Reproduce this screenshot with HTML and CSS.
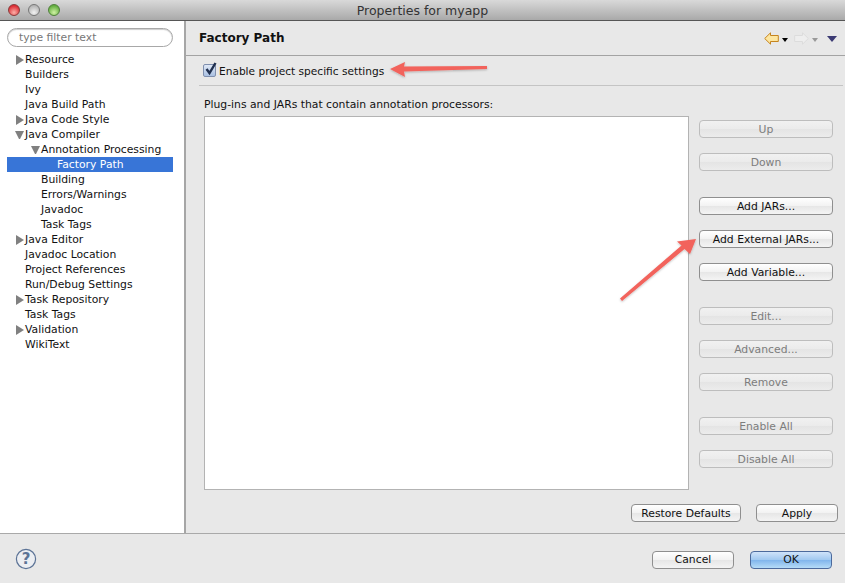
FILE: index.html
```html
<!DOCTYPE html>
<html lang="en">
<head>
    <meta charset="UTF-8">
    <title>Properties for myapp</title>
    <link rel="stylesheet" href="styles.css">
</head>
<body>

<div class="window">
    <div class="titlebar">
        <div class="lights">
            <span class="light red"></span>
            <span class="light grey"></span>
            <span class="light green"></span>
        </div>
        <div class="title">Properties for myapp</div>
    </div>

    <div class="middle">
        <div class="sidebar">
            <div class="filter">type filter text</div>
            <ul class="tree">
                <li class="row"><span class="tw closed"></span>Resource</li>
                <li class="row"><span class="tw"></span>Builders</li>
                <li class="row"><span class="tw"></span>Ivy</li>
                <li class="row"><span class="tw"></span>Java Build Path</li>
                <li class="row"><span class="tw closed"></span>Java Code Style</li>
                <li class="row"><span class="tw open"></span>Java Compiler</li>
                <li class="row lvl1"><span class="tw open"></span>Annotation Processing</li>
                <li class="row lvl2 selected"><span class="tw"></span>Factory Path</li>
                <li class="row lvl1"><span class="tw"></span>Building</li>
                <li class="row lvl1"><span class="tw"></span>Errors/Warnings</li>
                <li class="row lvl1"><span class="tw"></span>Javadoc</li>
                <li class="row lvl1"><span class="tw"></span>Task Tags</li>
                <li class="row"><span class="tw closed"></span>Java Editor</li>
                <li class="row"><span class="tw"></span>Javadoc Location</li>
                <li class="row"><span class="tw"></span>Project References</li>
                <li class="row"><span class="tw"></span>Run/Debug Settings</li>
                <li class="row"><span class="tw closed"></span>Task Repository</li>
                <li class="row"><span class="tw"></span>Task Tags</li>
                <li class="row"><span class="tw closed"></span>Validation</li>
                <li class="row"><span class="tw"></span>WikiText</li>
            </ul>
        </div>

        <div class="main">
            <div class="page-head">
                <h1>Factory Path</h1>
                <div class="nav">
                    <svg width="15" height="13" viewBox="0 0 15 13">
                        <path d="M0.7 6.5 L6.5 0.8 V3.5 H14.3 V9.5 H6.5 V12.2 Z" fill="#fde6a0" stroke="#c5841f" stroke-width="1"/>
                    </svg>
                    <span class="caret"></span>
                    <svg width="15" height="13" viewBox="0 0 15 13">
                        <path d="M14.3 6.5 L8.5 0.8 V3.5 H0.7 V9.5 H8.5 V12.2 Z" fill="#eeeeee" stroke="#dcdcdc" stroke-width="1"/>
                    </svg>
                    <span class="caret off"></span>
                    <span class="caret menu"></span>
                </div>
            </div>

            <div class="enable-row">
                <span class="check">
                    <svg width="15" height="16" viewBox="0 0 15 16">
                        <path d="M3.5 8 L6.5 12 L12.5 2" fill="none" stroke="#20304f" stroke-width="2.4"/>
                    </svg>
                </span>
                <label>Enable project specific settings</label>
            </div>

            <div class="content">
                <div class="list-label">Plug-ins and JARs that contain annotation processors:</div>
                <div class="list-area">
                    <div class="listbox"></div>
                    <div class="side-buttons">
                        <div class="btn-group">
                            <button class="btn" disabled>Up</button>
                            <button class="btn" disabled>Down</button>
                        </div>
                        <div class="btn-group">
                            <button class="btn">Add JARs...</button>
                            <button class="btn">Add External JARs...</button>
                            <button class="btn">Add Variable...</button>
                        </div>
                        <div class="btn-group">
                            <button class="btn" disabled>Edit...</button>
                            <button class="btn" disabled>Advanced...</button>
                            <button class="btn" disabled>Remove</button>
                        </div>
                        <div class="btn-group">
                            <button class="btn" disabled>Enable All</button>
                            <button class="btn" disabled>Disable All</button>
                        </div>
                    </div>
                </div>
                <div class="page-buttons">
                    <button class="btn restore">Restore Defaults</button>
                    <button class="btn apply">Apply</button>
                </div>
            </div>
        </div>
    </div>

    <div class="footer">
        <svg class="help" width="22" height="22" viewBox="0 0 22 22">
            <circle cx="11" cy="11" r="9.6" fill="#eceef2" stroke="#5c7396" stroke-width="1.2"/>
            <text x="11" y="16" text-anchor="middle" class="help-mark">?</text>
        </svg>
        <div class="footer-buttons">
            <button class="btn cancel">Cancel</button>
            <button class="btn ok">OK</button>
        </div>
    </div>

    <!-- red annotation arrows drawn over the dialog -->
    <svg class="annotations" width="845" height="583" viewBox="0 0 845 583">
        <defs>
            <filter id="soft" x="-20%" y="-40%" width="140%" height="180%">
                <feDropShadow dx="0" dy="1" stdDeviation="1" flood-color="#000" flood-opacity="0.25"/>
            </filter>
        </defs>
        <g fill="#f2635c" filter="url(#soft)">
            <path d="M390 69 L405 62 L404 66.5 L487 66 L487 69 L404 71.5 L405 77 Z"/>
            <path d="M696 239 L690 254 L684.5 249 L622 301 L620 298.5 L681.5 245.5 L677 241.5 Z"/>
        </g>
    </svg>
</div>

</body>
</html>
```

FILE: styles.css
```css
* {
    box-sizing: border-box;
}
body {
    margin: 0;
    font-family: "DejaVu Sans", sans-serif;
    font-size: 10.8px;
    color: #111;
    background-color: #e8e8e8;
}
.window {
    position: relative;
    width: 845px;
    height: 583px;
    display: flex;
    flex-direction: column;
    overflow: hidden;
}
.titlebar {
    height: 21px;
    flex: none;
    display: flex;
    align-items: center;
    position: relative;
    background: linear-gradient(#d9d9d9, #a9a9a9);
    border-bottom: 1px solid #565656;
}
.lights {
    display: flex;
    gap: 8px;
    padding-left: 8px;
}
.light {
    width: 12px;
    height: 12px;
    border-radius: 50%;
    border: 1px solid #777;
}
.light.red {
    background: radial-gradient(circle at 50% 75%, #fbb0a8, #dc2a32 75%);
    border-color: #8a3a3a;
}
.light.grey {
    background: radial-gradient(circle at 50% 75%, #f2f2f2, #b4b4b4 75%);
}
.light.green {
    background: radial-gradient(circle at 50% 75%, #d0f2a4, #62ad3e 75%);
    border-color: #4e7f3a;
}
.title {
    position: absolute;
    left: 0;
    right: 0;
    text-align: center;
    font-size: 12.5px;
    color: #333;
}
.middle {
    flex: 1;
    display: flex;
    min-height: 0;
}
.sidebar {
    width: 186px;
    flex: none;
    background-color: #fff;
    border-right: 2px solid #a6a6a6;
    padding: 7px 11px 0 7px;
}
.filter {
    height: 19px;
    line-height: 16px;
    padding: 1px 0 0 11px;
    border: 1px solid #a8a8a8;
    border-radius: 10px;
    color: #777;
    box-shadow: inset 0 1px 1px #ccc;
}
.tree {
    list-style: none;
    margin: 5px 0 0;
    padding: 0;
}
.row {
    height: 15px;
    line-height: 15px;
    display: flex;
    align-items: center;
    padding-left: 9px;
    white-space: nowrap;
}
.row.lvl1 {
    padding-left: 25px;
}
.row.lvl2 {
    padding-left: 41px;
}
.row.selected {
    background-color: #3875d7;
    color: #fff;
}
.tw {
    width: 9px;
    height: 10px;
    flex: none;
}
.tw.closed {
    width: 8px;
    margin-right: 1px;
    border-left: 8px solid #808080;
    border-top: 5px solid transparent;
    border-bottom: 5px solid transparent;
}
.tw.open {
    height: 8px;
    margin: 0 1px 0 -1px;
    border-top: 8px solid #808080;
    border-left: 4.5px solid transparent;
    border-right: 4.5px solid transparent;
}
.main {
    flex: 1;
    display: flex;
    flex-direction: column;
    min-width: 0;
}
.page-head {
    height: 35px;
    flex: none;
    display: flex;
    align-items: center;
    justify-content: space-between;
    padding: 0 8px 0 13px;
    border-bottom: 1px solid #a3a3a3;
}
h1 {
    margin: 0;
    font-size: 12px;
    font-weight: bold;
}
.nav {
    display: flex;
    align-items: center;
    padding-top: 1px;
}
.caret {
    width: 0;
    height: 0;
    margin: 2px 6px 0 3px;
    border-top: 4px solid #000;
    border-left: 3px solid transparent;
    border-right: 3px solid transparent;
}
.caret.off {
    border-top-color: #999;
    margin-right: 9px;
}
.caret.menu {
    margin: 1px 0 0;
    border-top: 6px solid #3b3a73;
    border-left: 5px solid transparent;
    border-right: 5px solid transparent;
}
.enable-row {
    height: 30px;
    flex: none;
    margin: 0 2px 0 13px;
    padding-left: 4px;
    display: flex;
    align-items: center;
    gap: 3px;
    border-bottom: 1px solid #c4c4c4;
}
.enable-row label {
    font-size: 10.6px;
    padding-top: 1px;
}
.check {
    width: 13px;
    height: 13px;
    position: relative;
    border: 1px solid #7f8fae;
    border-radius: 2px;
    background: linear-gradient(#dfe8f6, #a9c0e2);
}
.check svg {
    position: absolute;
    left: -1px;
    top: -4px;
}
.content {
    flex: 1;
    display: flex;
    flex-direction: column;
    padding: 11px 12px 0 18px;
    min-height: 0;
}
.list-label {
    height: 19px;
    line-height: 15px;
    white-space: nowrap;
}
.list-area {
    display: flex;
    gap: 10px;
    height: 374px;
    flex: none;
}
.listbox {
    width: 485px;
    background-color: #fff;
    border: 1px solid #b3b3b3;
}
.side-buttons {
    width: 134px;
    padding-top: 4px;
    display: flex;
    flex-direction: column;
    gap: 26px;
}
.btn-group {
    display: flex;
    flex-direction: column;
    gap: 15px;
}
.btn {
    height: 18px;
    padding: 0;
    font-family: inherit;
    font-size: 10.8px;
    color: #111;
    background: linear-gradient(#ffffff, #f2f2f2 50%, #e6e6e6 50%, #f4f4f4);
    border: 1px solid #8f8f8f;
    border-radius: 4px;
    white-space: nowrap;
}
.btn:disabled {
    color: #7d7d7d;
    background: linear-gradient(#f1f1f1, #ebebeb 50%, #e4e4e4 50%, #ececec);
    border-color: #bdbdbd;
}
.page-buttons {
    display: flex;
    gap: 15px;
    margin-top: 14px;
    margin-right: -5px;
    justify-content: flex-end;
}
.restore {
    width: 110px;
}
.apply {
    width: 82px;
}
.footer {
    height: 50px;
    flex: none;
    display: flex;
    align-items: center;
    justify-content: space-between;
    padding: 0 13px 0 15px;
    border-top: 1px solid #a9a9a9;
}
.help {
    margin-top: 1px;
}
.help-mark {
    font-family: "DejaVu Sans", sans-serif;
    font-size: 15px;
    font-weight: bold;
    fill: #5c7396;
}
.footer-buttons {
    display: flex;
    gap: 16px;
    margin-top: 2px;
}
.cancel, .ok {
    width: 82px;
}
.ok {
    background: linear-gradient(#cfe3fa, #a0c8f0 50%, #7fb4ec 50%, #b6dcf8);
    border-color: #4c6a9c;
}
.annotations {
    position: absolute;
    left: 0;
    top: 0;
    pointer-events: none;
}
```
